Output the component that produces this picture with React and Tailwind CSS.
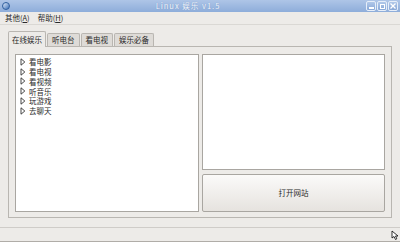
import React from "react";

const font = { fontFamily: '"Noto Sans CJK SC", "Noto Sans", sans-serif' };

function Arrow() {
  return (
    <svg width="6" height="8" viewBox="0 0 6 8" className="shrink-0">
      <path d="M1 0.8 L4.8 4 L1 7.2 Z" fill="#fff" stroke="#333" strokeWidth="0.9" />
    </svg>
  );
}

function WinBtn({ children }) {
  return (
    <div className="w-[10px] h-[10px] rounded-[2px] border border-[#e6eef9] bg-gradient-to-b from-[#b1c8e9] to-[#89a8d7] flex items-center justify-center">
      {children}
    </div>
  );
}

export default function App() {
  const items = ["看电影", "看电视", "看视频", "听音乐", "玩游戏", "去聊天"];
  const tabs = ["在线娱乐", "听电台", "看电视", "娱乐必备"];
  return (
    <div className="w-[400px] h-[242px] bg-[#edebe8] flex flex-col overflow-hidden text-[#2a2a2a]" style={font}>
      {/* title bar */}
      <div className="h-[12px] bg-gradient-to-b from-[#aec5e7] to-[#8eadda] flex items-center relative">
        <div className="ml-[2px] w-[8px] h-[8px] rounded-full bg-gradient-to-br from-[#dfe9f7] to-[#3f73b8] border border-[#2f5e9e]" />
        <div className="flex-1 text-center text-[7.5px] leading-none tracking-[1px] text-[#f3f6fb]" style={{ textShadow: "0 0 1px #6a8cc0" }}>
          Linux 娱乐 v1.5
        </div>
        <div className="flex gap-[1px] mr-[2px]">
          <WinBtn>
            <div className="w-[5px] h-[1.5px] bg-white mt-[4px]" />
          </WinBtn>
          <WinBtn>
            <div className="w-[5px] h-[5px] border border-white" />
          </WinBtn>
          <WinBtn>
            <svg width="6" height="6" viewBox="0 0 6 6">
              <path d="M0.5 0.5 L5.5 5.5 M5.5 0.5 L0.5 5.5" stroke="#fff" strokeWidth="1.3" />
            </svg>
          </WinBtn>
        </div>
      </div>
      {/* menu bar */}
      <div className="h-[13px] flex items-center gap-[8px] px-[5px] text-[7.5px] leading-none border-b border-[#dad8d4]">
        <span>其他(<span className="underline">A</span>)</span>
        <span>帮助(<span className="underline">H</span>)</span>
      </div>
      {/* tab area */}
      <div className="pt-[6px] px-[8px] flex flex-col">
        <div className="flex items-end h-[15px] gap-[1px] text-[7.5px] leading-none">
          {tabs.map((t, i) =>
            i === 0 ? (
              <div key={t} className="h-[16px] -mb-[1px] px-[3px] flex items-center bg-[#edebe8] border border-[#b9b6b1] border-b-0 rounded-t-[2px] relative z-10">
                {t}
              </div>
            ) : (
              <div key={t} className="h-[13px] px-[4px] flex items-center bg-[#dedbd7] border border-[#b9b6b1] border-b-0 rounded-t-[2px]">
                {t}
              </div>
            )
          )}
        </div>
        <div className="h-[172px] w-[384px] border border-[#b9b6b1] bg-[#edebe8] pt-[7px] pb-[5px] pl-[6px] pr-[6px] flex gap-[3px]">
          <div className="w-[184px] bg-white border border-[#a9a6a1] py-[2px] pl-[4px] flex flex-col text-[7.5px] leading-none">
            {items.map((it) => (
              <div key={it} className="h-[9.8px] flex items-center gap-[3px]">
                <Arrow />
                <span>{it}</span>
              </div>
            ))}
          </div>
          <div className="flex-1 flex flex-col gap-[4px]">
            <div className="h-[116px] bg-white border border-[#a9a6a1]" />
            <div className="flex-1 rounded-[2px] border border-[#a9a6a1] bg-gradient-to-b from-[#fbfaf9] to-[#e6e3df] flex items-center justify-center text-[7.5px] leading-none">
              打开网站
            </div>
          </div>
        </div>
      </div>
      {/* status bar */}
      <div className="mt-[9px] flex-1 border-t border-[#cfccc8] bg-[#edebe8] relative border-b border-b-[#b0ada8]">
        <svg className="absolute right-[1px] bottom-[1px]" width="8" height="10" viewBox="0 0 8 10">
          <path d="M1 1 L1 8 L3 6.5 L4.5 9.5 L5.8 8.8 L4.5 6 L7 6 Z" fill="#fff" stroke="#000" strokeWidth="0.8" />
        </svg>
      </div>
    </div>
  );
}
